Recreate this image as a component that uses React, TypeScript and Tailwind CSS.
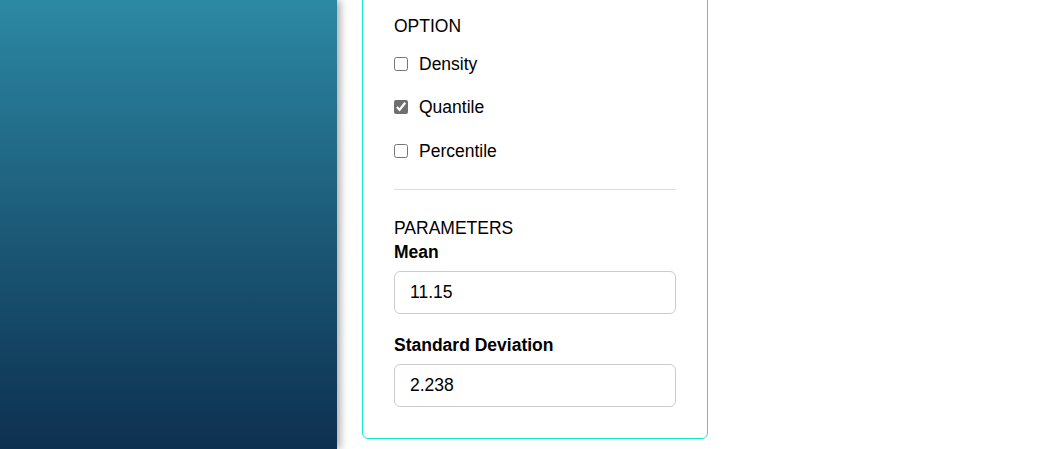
import { useState } from "react";

export default function App() {
  const [opts, setOpts] = useState({ density: false, quantile: true, percentile: false });
  const [mean, setMean] = useState("11.15");
  const [sd, setSd] = useState("2.238");

  const toggle = (key: "density" | "quantile" | "percentile") =>
    setOpts((o) => ({ ...o, [key]: !o[key] }));

  const rows: { key: "density" | "quantile" | "percentile"; label: string; mt: string }[] = [
    { key: "density", label: "Density", mt: "mt-[14px]" },
    { key: "quantile", label: "Quantile", mt: "mt-[19px]" },
    { key: "percentile", label: "Percentile", mt: "mt-[20px]" },
  ];

  return (
    <div className="flex h-[449px] w-full overflow-hidden bg-white font-['Liberation_Sans',Arial,sans-serif] text-black">
      {/* Sidebar */}
      <div className="relative z-10 h-full w-[337px] shrink-0 bg-gradient-to-b from-[#2c89a4] to-[#0e3050] shadow-[3px_0_8px_rgba(0,0,0,0.35)]" />

      {/* Main */}
      <div className="pl-[25px]">
        <div className="-mt-[20px] w-[346px] rounded-md border border-[#14e8d4] px-[31px] pt-[33px] pb-[31px]">
          <div className="text-[17.5px] leading-6">OPTION</div>

          {rows.map((r) => (
            <label key={r.key} className={`${r.mt} flex h-6 cursor-pointer items-center`}>
              <input
                type="checkbox"
                checked={opts[r.key]}
                onChange={() => toggle(r.key)}
                className="h-[14px] w-[14px] accent-[#6f6f6f]"
              />
              <span className="ml-[11px] text-[17.5px] leading-6">{r.label}</span>
            </label>
          ))}

          <div className="mt-[26px] h-px bg-[#dcdcdc]" />

          <div className="mt-[26px] text-[17.5px] leading-6">PARAMETERS</div>
          <div className="text-[17.5px] font-bold leading-6">Mean</div>
          <input
            value={mean}
            onChange={(e) => setMean(e.target.value)}
            className="mt-[7px] block h-[43px] w-full rounded-md border border-[#cccccc] px-[15px] text-[17.5px] outline-none"
          />

          <div className="mt-[19px] text-[17.5px] font-bold leading-6">Standard Deviation</div>
          <input
            value={sd}
            onChange={(e) => setSd(e.target.value)}
            className="mt-[7px] block h-[43px] w-full rounded-md border border-[#cccccc] px-[15px] text-[17.5px] outline-none"
          />
        </div>
      </div>
    </div>
  );
}
